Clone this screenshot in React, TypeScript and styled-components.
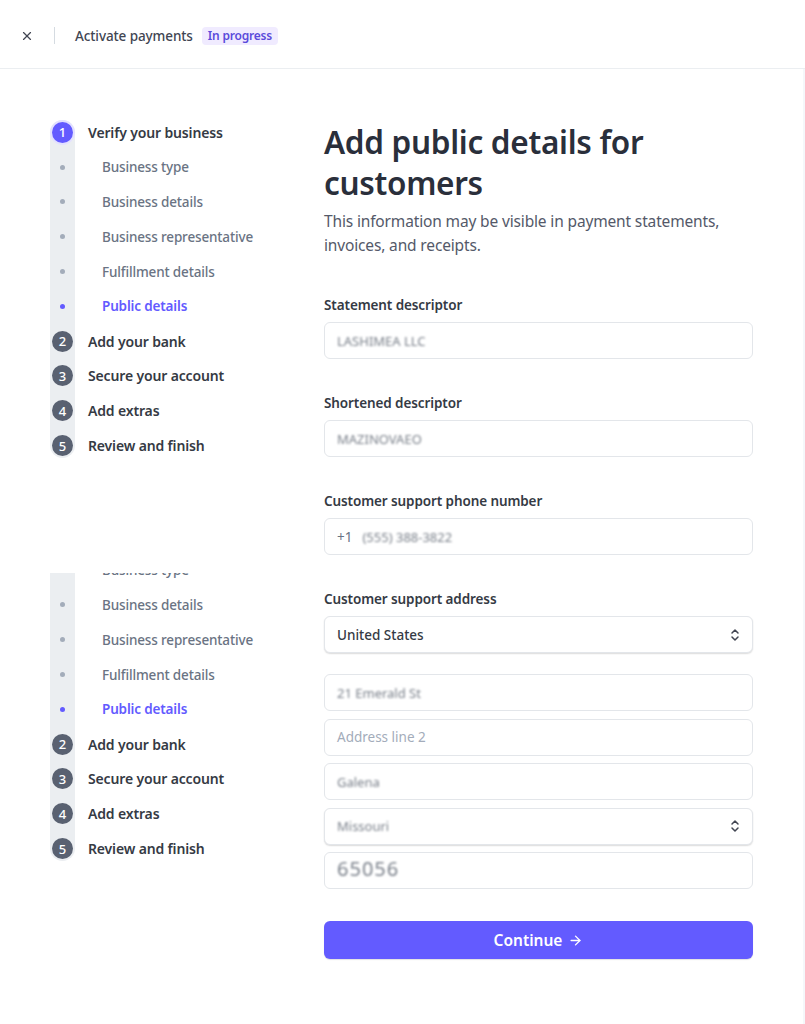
import React from 'react'
import styled, { createGlobalStyle } from 'styled-components'
import { X, ArrowRight } from 'lucide-react'

const GlobalStyle = createGlobalStyle`
  * { box-sizing: border-box; }
  body {
    margin: 0;
    background: #fff;
    font-family: "Noto Sans", "Open Sans", "Liberation Sans", sans-serif;
    color: #353a44;
  }
`

const Header = styled.header`
  height: 69px;
  display: flex;
  align-items: center;
  padding: 3px 0 0 20px;
  border-bottom: 1px solid #ebeef1;
`

const CloseButton = styled.button`
  display: flex;
  align-items: center;
  justify-content: center;
  width: 14px;
  height: 14px;
  padding: 0;
  border: none;
  background: none;
  color: #414552;
`

const Divider = styled.span`
  width: 1px;
  height: 17px;
  background: #d5dbe1;
  margin: 0 20px 0 20px;
`

const HeaderTitle = styled.span`
  font-size: 13.5px;
  font-weight: 500;
  letter-spacing: -0.1px;
  color: #414552;
`

const Badge = styled.span`
  margin-left: 9px;
  padding: 1px 6px;
  border-radius: 4px;
  background: #f0ebff;
  color: #5b4bdb;
  font-size: 12px;
  font-weight: 600;
  letter-spacing: -0.2px;
  line-height: 16px;
`

const Body = styled.div`
  display: flex;
  gap: 24px;
  padding: 46px 52px 60px 50px;
  box-shadow: inset -2px 0 0 #f5f7fa;
  min-height: 955px;
`

const Sidebar = styled.aside`
  width: 250px;
  flex-shrink: 0;
`

const Stepper = styled.ol<{ $offset?: number }>`
  position: relative;
  list-style: none;
  margin: ${p => p.$offset ?? 0}px 0 0 0;
  padding: 0;

  &::before {
    content: '';
    position: absolute;
    left: 0;
    top: 5px;
    bottom: 5px;
    width: 25px;
    border-radius: 13px;
    background: #ebeef1;
  }
`

const StepRow = styled.li`
  position: relative;
  height: 34.8px;
  display: flex;
  align-items: center;
`

const Marker = styled.span`
  width: 25px;
  display: flex;
  justify-content: center;
  flex-shrink: 0;
`

const StepNumber = styled.span<{ $active?: boolean }>`
  width: 21px;
  height: 21px;
  border-radius: 50%;
  display: flex;
  align-items: center;
  justify-content: center;
  background: ${p => (p.$active ? '#635bff' : '#596171')};
  box-shadow: ${p => (p.$active ? '0 0 0 2px #e3e1ff' : 'none')};
  color: #fff;
  font-size: 13px;
  font-weight: 500;
`

const Dot = styled.span<{ $active?: boolean }>`
  width: 5px;
  height: 5px;
  border-radius: 50%;
  background: ${p => (p.$active ? '#635bff' : '#a3acba')};
`

const StepLabel = styled.span`
  margin-left: 13px;
  font-size: 14px;
  font-weight: 600;
  letter-spacing: -0.15px;
  color: #353a44;
`

const SubLabel = styled.span<{ $active?: boolean }>`
  margin-left: 27px;
  font-size: 13.5px;
  letter-spacing: -0.15px;
  font-weight: ${p => (p.$active ? 600 : 500)};
  color: ${p => (p.$active ? '#635bff' : '#6a7383')};
`

const ClipWindow = styled.div`
  margin-top: 110px;
  height: 292px;
  overflow: hidden;
`

const Main = styled.main`
  flex: 1;
  max-width: 429px;
`

const Title = styled.h1`
  margin: 6px 0 0;
  font-size: 31.5px;
  letter-spacing: -0.3px;
  line-height: 41px;
  font-weight: 600;
  color: #2a2f3b;
`

const Subtitle = styled.p`
  margin: 6px 0 38px;
  font-size: 15.5px;
  letter-spacing: -0.15px;
  line-height: 24px;
  color: #545969;
`

const FieldGroup = styled.div`
  margin-bottom: 34px;
`

const Label = styled.div`
  font-size: 13.5px;
  letter-spacing: -0.1px;
  line-height: 20px;
  font-weight: 600;
  color: #353a44;
  margin-bottom: 7px;
`

const InputBox = styled.div<{ $select?: boolean }>`
  height: 37px;
  display: flex;
  align-items: center;
  gap: 10px;
  padding: 0 12px;
  border: 1px solid #e3e6ea;
  border-radius: 6px;
  background: #fff;
  box-shadow: ${p => (p.$select ? '0 1px 1.5px rgba(0, 0, 0, 0.14)' : 'none')};
  font-size: 13.5px;
  color: #353a44;
`

const Prefix = styled.span`
  color: #687385;
`

// values are obscured in the source, so they are drawn softened
const Value = styled.span<{ $size?: number; $lift?: number }>`
  flex: 1;
  color: #7a808a;
  font-size: ${p => p.$size ?? 13}px;
  letter-spacing: ${p => (p.$size ? 1 : 0)}px;
  margin-top: ${p => -(p.$lift ?? 0)}px;
  filter: blur(0.8px);
`

const PlainValue = styled.span`
  flex: 1;
  font-weight: 500;
  color: #353a44;
`

const Placeholder = styled.span`
  flex: 1;
  color: #a3acba;
`

const AddressStack = styled.div`
  display: flex;
  flex-direction: column;
  gap: 7.5px;
  margin-top: 21px;
  margin-bottom: 32px;
`

const ContinueButton = styled.button`
  width: 100%;
  height: 38px;
  border: none;
  border-radius: 6px;
  background: #635bff;
  color: #fff;
  font-family: inherit;
  font-size: 15.5px;
  font-weight: 600;
  display: flex;
  align-items: center;
  justify-content: center;
  gap: 6px;
  box-shadow: 0 1px 1px rgba(0, 0, 0, 0.12);
`

const UpDown = () => (
  <svg width="10" height="14" viewBox="0 0 10 14" fill="none" stroke="#414552" strokeWidth="1.5" strokeLinecap="round" strokeLinejoin="round">
    <path d="M2 5 L5 2 L8 5" />
    <path d="M2 9 L5 12 L8 9" />
  </svg>
)

const subSteps = ['Business type', 'Business details', 'Business representative', 'Fulfillment details', 'Public details']
const mainSteps = ['Add your bank', 'Secure your account', 'Add extras', 'Review and finish']

function Steps({ offset }: { offset?: number }) {
  return (
    <Stepper $offset={offset}>
      <StepRow>
        <Marker><StepNumber $active>1</StepNumber></Marker>
        <StepLabel>Verify your business</StepLabel>
      </StepRow>
      {subSteps.map((s, i) => {
        const active = i === subSteps.length - 1
        return (
          <StepRow key={s}>
            <Marker><Dot $active={active} /></Marker>
            <SubLabel $active={active}>{s}</SubLabel>
          </StepRow>
        )
      })}
      {mainSteps.map((s, i) => (
        <StepRow key={s}>
          <Marker><StepNumber>{i + 2}</StepNumber></Marker>
          <StepLabel>{s}</StepLabel>
        </StepRow>
      ))}
    </Stepper>
  )
}

export default function App() {
  return (
    <>
      <GlobalStyle />
      <Header>
        <CloseButton aria-label="Close"><X size={14} strokeWidth={2} /></CloseButton>
        <Divider />
        <HeaderTitle>Activate payments</HeaderTitle>
        <Badge>In progress</Badge>
      </Header>
      <Body>
        <Sidebar>
          <Steps />
          <ClipWindow>
            <Steps offset={-55} />
          </ClipWindow>
        </Sidebar>
        <Main>
          <Title>Add public details for customers</Title>
          <Subtitle>This information may be visible in payment statements, invoices, and receipts.</Subtitle>

          <FieldGroup>
            <Label>Statement descriptor</Label>
            <InputBox><Value>LASHIMEA LLC</Value></InputBox>
          </FieldGroup>

          <FieldGroup>
            <Label>Shortened descriptor</Label>
            <InputBox><Value>MAZINOVAEO</Value></InputBox>
          </FieldGroup>

          <FieldGroup>
            <Label>Customer support phone number</Label>
            <InputBox><Prefix>+1</Prefix><Value>(555) 388-3822</Value></InputBox>
          </FieldGroup>

          <Label>Customer support address</Label>
          <InputBox $select><PlainValue>United States</PlainValue><UpDown /></InputBox>
          <AddressStack>
            <InputBox><Value>21 Emerald St</Value></InputBox>
            <InputBox><Placeholder>Address line 2</Placeholder></InputBox>
            <InputBox><Value>Galena</Value></InputBox>
            <InputBox $select><Value>Missouri</Value><UpDown /></InputBox>
            <InputBox><Value $size={20} $lift={4}>65056</Value></InputBox>
          </AddressStack>

          <ContinueButton>Continue <ArrowRight size={15} strokeWidth={2.2} /></ContinueButton>
        </Main>
      </Body>
    </>
  )
}
